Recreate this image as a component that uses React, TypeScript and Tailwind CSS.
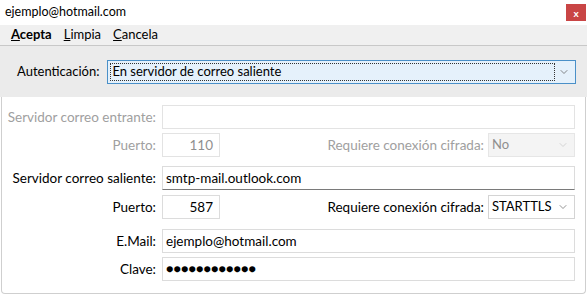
import { ChevronDown } from "lucide-react";

const font = { fontFamily: 'Lato, "Noto Sans", sans-serif' };

function Field({
  label,
  value,
  disabled,
  narrow,
  right,
  dark,
  dots,
}: {
  label: string;
  value?: string;
  disabled?: boolean;
  narrow?: boolean;
  right?: boolean;
  dark?: boolean;
  dots?: boolean;
}) {
  return (
    <div className="flex items-center h-[24px]">
      <span
        className={`w-[160px] shrink-0 whitespace-nowrap text-right pr-[6px] ${
          disabled ? "text-[#a0a0a0]" : "text-black"
        }`}
      >
        {label}
      </span>
      <div
        className={`h-[24px] flex items-center px-[3px] border ${
          narrow ? "w-[58px]" : "flex-1"
        } ${right ? "justify-end pr-[6px]" : ""} ${dots ? "text-[12.5px]" : ""} ${
          disabled
            ? "border-[#e3e3e3] text-[#8f8f8f]"
            : dark
            ? "border-[#dcdcdc] border-b-[#7a7a7a] text-black"
            : "border-[#dcdcdc] text-black"
        }`}
      >
        {value}
      </div>
    </div>
  );
}

function CipherSelect({ value, disabled }: { value: string; disabled?: boolean }) {
  return (
    <div className="flex items-center ml-auto">
      <span className={`whitespace-nowrap pr-[4px] ${disabled ? "text-[#a0a0a0]" : "text-black"}`}>
        Requiere conexión cifrada:
      </span>
      <div
        className={`w-[87px] h-[24px] flex items-center pl-[3px] pr-[5px] border text-[13px] ${
          disabled ? "border-[#e6e6e6] bg-[#f4f4f4] text-[#8f8f8f]" : "border-[#d4d4d4] bg-white text-black"
        }`}
      >
        <span className="flex-1">{value}</span>
        <ChevronDown className={`w-[12px] h-[12px] ${disabled ? "text-[#c8c8c8]" : "text-[#707070]"}`} strokeWidth={1.5} />
      </div>
    </div>
  );
}

export default function App() {
  return (
    <div className="w-[587px] h-[295px] bg-white text-[13.5px] overflow-hidden flex flex-col" style={font}>
      {/* title */}
      <div className="h-[25px] flex items-center justify-between pl-[5px] pr-[1px]">
        <span className="text-black text-[12.5px]">ejemplo@hotmail.com</span>
        <div className="w-[20px] h-[17px] bg-[#c94545] text-white text-[10px] font-bold leading-none flex items-center justify-center">
          x
        </div>
      </div>
      {/* menu */}
      <div className="h-[21px] bg-[#f0f0f0] border-b border-[#c8c8c8] flex items-center gap-[12px] pl-[11px] text-[13px]">
        <span className="font-bold">
          <span className="underline">A</span>cepta
        </span>
        <span>
          <span className="underline">L</span>impia
        </span>
        <span>
          <span className="underline">C</span>ancela
        </span>
      </div>
      {/* auth */}
      <div className="h-[51px] bg-[#ebebeb] flex items-center pl-[17px] pr-[11px] text-[13px]">
        <span className="pr-[8px]">Autenticación:</span>
        <div className="flex-1 h-[24px] border border-[#4a90c8] bg-[#e5f1fb] flex items-center p-[2px]">
          <div className="flex-1 h-full border border-dotted border-[#333] flex items-center pl-[1px]">
            En servidor de correo saliente
          </div>
          <div className="w-[18px] flex justify-center">
            <ChevronDown className="w-[12px] h-[12px] text-[#606060]" strokeWidth={1.5} />
          </div>
        </div>
      </div>
      {/* panel */}
      <div className="flex-1 mx-[1px] mb-[1px] border border-t-0 border-[#cfcfcf] rounded-b-[4px] bg-white pr-[10px] pt-[8px]">
        <Field label="Servidor correo entrante:" disabled />
        <div className="flex items-center mt-[4px]">
          <Field label="Puerto:" value="110" disabled narrow right />
          <CipherSelect value="No" disabled />
        </div>
        <div className="mt-[9px]">
          <Field label="Servidor correo saliente:" value="smtp-mail.outlook.com" dark />
        </div>
        <div className="flex items-center mt-[5px]">
          <Field label="Puerto:" value="587" narrow right />
          <CipherSelect value="STARTTLS" />
        </div>
        <div className="mt-[10px]">
          <Field label="E.Mail:" value="ejemplo@hotmail.com" />
        </div>
        <div className="mt-[4px]">
          <Field label="Clave:" value="●●●●●●●●●●●●" dots />
        </div>
      </div>
    </div>
  );
}
